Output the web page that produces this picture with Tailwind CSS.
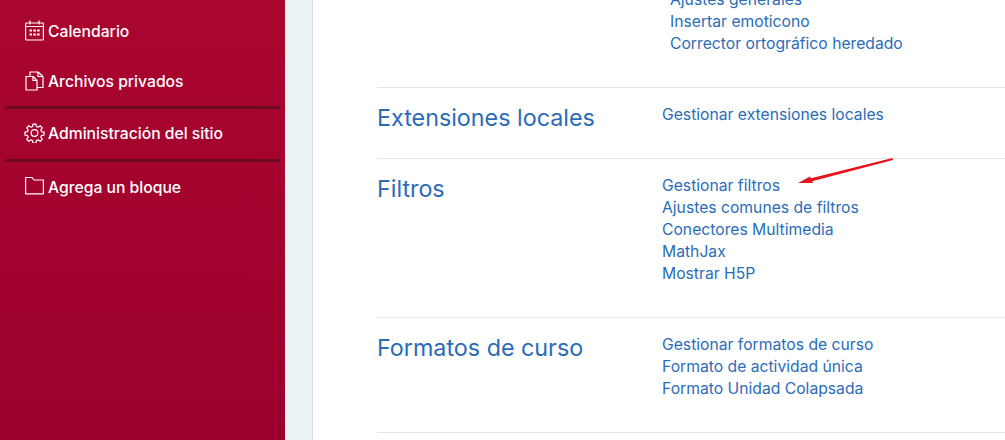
<!DOCTYPE html>
<html lang="es">
<head>
<meta charset="utf-8">
<title>Administración del sitio</title>
<script src="https://cdn.jsdelivr.net/npm/@tailwindcss/browser@4"></script>
</head>
<body class="font-['Inter',sans-serif] overflow-hidden">
<div class="relative flex h-[440px] w-[1005px] overflow-hidden bg-white">

  <!-- sidebar -->
  <aside class="w-[285px] shrink-0 bg-gradient-to-b from-[#a9062f] to-[#9b002c] pt-[17px] text-[15.700px] font-[450] text-white">
    <a href="#" class="flex h-[30px] items-center pl-[24px]">
      <svg class="mr-[3px] h-[21px] w-[21px] -translate-y-[2px]" viewBox="0 0 21 21" fill="none" stroke="currentColor" stroke-width="1.200">
        <rect x="1.600" y="3" width="17.800" height="17" rx="0.800" />
        <path d="M1.600 6.500h17.800M6 0.500v4M15 0.500v4" />
        <path d="M5.500 10.500h2.500M9.300 10.500h2.500M13.100 10.500h2.500M5.500 14.500h2.500M9.300 14.500h2.500M13.100 14.500h2.500" stroke-width="2.200" />
      </svg>
      <span>Calendario</span>
    </a>
    <a href="#" class="mt-[20px] flex h-[30px] items-center pl-[24px]">
      <svg class="mr-[3px] h-[21px] w-[21px] -translate-y-[2px]" viewBox="0 0 21 21" fill="none" stroke="currentColor" stroke-width="1.200" stroke-linejoin="round">
        <path d="M2 6.500h7l4 4v9.500H2z" />
        <path d="M9 6.500v4h4" />
        <path d="M6 6.500V2h8l5 4.500v11h-6" />
        <path d="M14 2v4.500h5" />
      </svg>
      <span>Archivos privados</span>
    </a>
    <div class="mx-[5px] mt-[9px] h-[3px] bg-[#6b0a20]"></div>
    <a href="#" class="mt-[10px] flex h-[30px] items-center pl-[24px]">
      <svg class="mr-[3px] h-[21px] w-[21px] -translate-y-[2px]" viewBox="0 0 24 24" fill="none" stroke="currentColor" stroke-width="1.400" stroke-linejoin="round">
        <path d="M10.300 2.300h3.400l.5 2.900 1.900.8 2.400-1.700 2.400 2.400-1.700 2.400.8 1.900 2.900.5v3.400l-2.900.5-.8 1.900 1.700 2.400-2.400 2.400-2.400-1.700-1.900.8-.5 2.900h-3.400l-.5-2.900-1.900-.8-2.400 1.700-2.400-2.400 1.700-2.400-.8-1.900-2.900-.5v-3.400l2.900-.5.8-1.900-1.700-2.400 2.400-2.400 2.400 1.700 1.900-.8z" />
        <circle cx="12" cy="12.500" r="3.800" />
      </svg>
      <span>Administración del sitio</span>
    </a>
    <div class="mx-[5px] mt-[10px] h-[3px] bg-[#6b0a20]"></div>
    <a href="#" class="mt-[11px] flex h-[30px] items-center pl-[24px]">
      <svg class="mr-[3px] h-[21px] w-[21px] -translate-y-[2px]" viewBox="0 0 21 21" fill="none" stroke="currentColor" stroke-width="1.200" stroke-linejoin="round">
        <path d="M1.600 1.500h6.400l2 2.500h9.400v13.800H1.600z" />
      </svg>
      <span>Agrega un bloque</span>
    </a>
  </aside>

  <!-- strip between sidebar and page -->
  <div class="w-[28px] shrink-0 border-r border-[#d5e0e2] bg-[#ebf2f6]"></div>

  <!-- content -->
  <main class="-mt-[11px] flex-1 pl-[64px] text-[15.700px] leading-[22px] text-[#2b6cb8]">
    <section class="pb-[32px] pl-[293px]">
      <a href="#" class="block">Ajustes generales</a>
      <a href="#" class="block">Insertar emoticono</a>
      <a href="#" class="block">Corrector ortográfico heredado</a>
    </section>

    <section class="flex border-t border-[#e3e5e7] pt-[16px] pb-[32px]">
      <h3 class="h-[22px] w-[285px] shrink-0 text-[23.300px] leading-[28px]">Extensiones locales</h3>
      <div><a href="#" class="block">Gestionar extensiones locales</a></div>
    </section>

    <section class="flex border-t border-[#e3e5e7] pt-[16px] pb-[32px]">
      <h3 class="h-[22px] w-[285px] shrink-0 text-[23.300px] leading-[28px]">Filtros</h3>
      <div>
        <a href="#" class="block">Gestionar filtros</a>
        <a href="#" class="block">Ajustes comunes de filtros</a>
        <a href="#" class="block">Conectores Multimedia</a>
        <a href="#" class="block">MathJax</a>
        <a href="#" class="block">Mostrar H5P</a>
      </div>
    </section>

    <section class="flex border-t border-[#e3e5e7] pt-[16px] pb-[32px]">
      <h3 class="h-[22px] w-[285px] shrink-0 text-[23.300px] leading-[28px]">Formatos de curso</h3>
      <div>
        <a href="#" class="block">Gestionar formatos de curso</a>
        <a href="#" class="block">Formato de actividad única</a>
        <a href="#" class="block">Formato Unidad Colapsada</a>
      </div>
    </section>

    <div class="border-t border-[#e3e5e7]"></div>
  </main>

  <!-- red annotation arrow -->
  <svg class="absolute left-[795px] top-[155px] h-[32px] w-[102px]" viewBox="0 0 102 32" fill="#e8141c">
    <path d="M97.500 3 L98 5 L16 26.500 L15 23.500 Z" />
    <path d="M3 28 L15 21.500 L18 28 Z" />
  </svg>
</div>
</body>
</html>
